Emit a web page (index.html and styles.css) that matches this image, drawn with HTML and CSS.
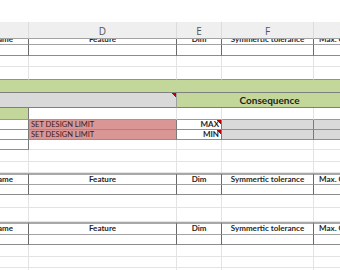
FILE: index.html
```html
<!DOCTYPE html>
<html>
<head>
<meta charset="utf-8">
<link rel="stylesheet" href="styles.css">
</head>
<body>
<div class="sheet">
  <div class="row colhdr">
    <div class="cell"></div><div class="cell">D</div><div class="cell">E</div><div class="cell">F</div><div class="cell">G</div>
  </div>

  <div class="row h6 tbl partial">
    <div class="cell name"><span>Name</span></div>
    <div class="cell"><span>Feature</span></div>
    <div class="cell"><span>Dim</span></div>
    <div class="cell"><span>Symmertic tolerance</span></div>
    <div class="cell maxc"><span>Max. Clearance</span></div>
  </div>
  <div class="row h11 tbl tbl-end">
    <div class="cell"></div><div class="cell"></div><div class="cell"></div><div class="cell"></div><div class="cell"></div>
  </div>
  <div class="row h11">
    <div class="cell"></div><div class="cell"></div><div class="cell"></div><div class="cell"></div><div class="cell"></div>
  </div>
  <div class="row h13 before-band">
    <div class="cell"></div><div class="cell"></div><div class="cell"></div><div class="cell"></div><div class="cell"></div>
  </div>

  <div class="row h13 band">
    <div class="cell full"></div>
  </div>
  <div class="row h15 split">
    <div class="cell grey-l note"></div>
    <div class="cell green-r">Consequence</div>
  </div>
  <div class="row h12 lim-top">
    <div class="cell green-a"></div><div class="cell"></div><div class="cell"></div><div class="cell"></div><div class="cell"></div>
  </div>
  <div class="row h10 lim">
    <div class="cell a"></div>
    <div class="cell red">SET DESIGN LIMIT</div>
    <div class="cell mm note">MAX</div>
    <div class="cell grey"></div>
    <div class="cell grey"></div>
  </div>
  <div class="row h10 lim">
    <div class="cell a"></div>
    <div class="cell red">SET DESIGN LIMIT</div>
    <div class="cell mm note">MIN</div>
    <div class="cell grey"></div>
    <div class="cell grey"></div>
  </div>
  <div class="row h10 lim-end">
    <div class="cell a"></div><div class="cell"></div><div class="cell"></div><div class="cell"></div><div class="cell"></div>
  </div>
  <div class="row h12">
    <div class="cell"></div><div class="cell"></div><div class="cell"></div><div class="cell"></div><div class="cell"></div>
  </div>
  <div class="row h11">
    <div class="cell"></div><div class="cell"></div><div class="cell"></div><div class="cell"></div><div class="cell"></div>
  </div>

  <div class="row h12 tbl thead">
    <div class="cell name"><span>Name</span></div>
    <div class="cell">Feature</div>
    <div class="cell">Dim</div>
    <div class="cell">Symmertic tolerance</div>
    <div class="cell maxc"><span>Max. Clearance</span></div>
  </div>
  <div class="row h10 tbl tbl-end">
    <div class="cell"></div><div class="cell"></div><div class="cell"></div><div class="cell"></div><div class="cell"></div>
  </div>
  <div class="row h13">
    <div class="cell"></div><div class="cell"></div><div class="cell"></div><div class="cell"></div><div class="cell"></div>
  </div>
  <div class="row h14">
    <div class="cell"></div><div class="cell"></div><div class="cell"></div><div class="cell"></div><div class="cell"></div>
  </div>

  <div class="row h13 tbl thead">
    <div class="cell name"><span>Name</span></div>
    <div class="cell">Feature</div>
    <div class="cell">Dim</div>
    <div class="cell">Symmertic tolerance</div>
    <div class="cell maxc"><span>Max. Clearance</span></div>
  </div>
  <div class="row h10 tbl tbl-end">
    <div class="cell"></div><div class="cell"></div><div class="cell"></div><div class="cell"></div><div class="cell"></div>
  </div>
  <div class="row h12">
    <div class="cell"></div><div class="cell"></div><div class="cell"></div><div class="cell"></div><div class="cell"></div>
  </div>
  <div class="row h11">
    <div class="cell"></div><div class="cell"></div><div class="cell"></div><div class="cell"></div><div class="cell"></div>
  </div>
  <div class="row h12">
    <div class="cell"></div><div class="cell"></div><div class="cell"></div><div class="cell"></div><div class="cell"></div>
  </div>
</div>
</body>
</html>
```

FILE: styles.css
```css
* { box-sizing: border-box; margin: 0; padding: 0; }

body {
  margin: 0;
  background: #ffffff;
  font-family: Lato, "Liberation Sans", sans-serif;
  color: #222222;
  width: 340px;
  height: 270px;
  overflow: hidden;
}

.sheet {
  width: 340px;
  padding-top: 22px;
  overflow: hidden;
}

.row {
  display: grid;
  grid-template-columns: 29px 148px 45px 92px 60px;
  width: 374px;
}

.cell {
  border-right: 1px solid #e3e3e3;
  border-bottom: 1px solid #e3e3e3;
  overflow: hidden;
  white-space: nowrap;
  position: relative;
}

.h6 { height: 6px; }
.h10 { height: 10px; }
.h11 { height: 11px; }
.h12 { height: 12px; }
.h13 { height: 13px; }
.h14 { height: 14px; }
.h15 { height: 15px; }

/* column letters */
.colhdr { height: 17px; background: #efefef; }
.colhdr .cell {
  border-right: 1px solid #dcdcdc;
  border-bottom: 1px solid #a3a3a3;
  font-family: "Open Sans", "Liberation Sans", sans-serif;
  font-size: 10px;
  color: #555555;
  text-align: center;
  line-height: 19px;
}

/* table header / body */
.tbl .cell {
  border-right: 1px solid #6a6a6a;
  border-bottom: 1px solid #a2a2a2;
  font-weight: 700;
  font-size: 8px;
  color: #1f1f1f;
  text-align: center;
}
.tbl-end .cell { border-bottom: 1px solid #8c8c8c; }
.thead .cell {
  border-top: 2px solid #a8a8a8;
  line-height: 9px;
}
.partial .cell span {
  display: block;
  margin-top: -5px;
  line-height: 11px;
}
.tbl .name span {
  display: block;
  margin-left: -23px;
}
.tbl .maxc { text-align: left; }
.tbl .maxc span {
  display: block;
  padding-left: 5px;
}

.before-band .cell { border-bottom: 1px solid #8c9a70; }

/* green band */
.band { background: #c4d79b; }
.band .full {
  grid-column: 1 / -1;
  border-right: none;
  border-bottom: 1px solid #7f7f7f;
}

.split .cell { border-bottom: 1px solid #7f7f7f; }
.split .grey-l {
  grid-column: 1 / 3;
  background: #d9d9d9;
  border-right: 1px solid #a0a0a0;
}
.split .green-r {
  grid-column: 3 / -1;
  background: #c4d79b;
  font-weight: 700;
  font-size: 10px;
  color: #1f1f1f;
  text-align: center;
  padding-right: 12px;
  line-height: 14px;
  border-right: none;
}

.note::after {
  content: "";
  position: absolute;
  top: 0;
  right: 0;
  width: 4px;
  height: 4px;
  background: linear-gradient(to bottom left, #c00000 50%, transparent 50%);
}

.lim-top .cell { border-bottom: 1px solid #9a9a9a; }
.lim-top .green-a {
  background: #c4d79b;
  border-right: 1px solid #7a7a7a;
}

.lim .cell {
  border-bottom: 1px solid #8f8f8f;
  border-right: 1px solid #7a7a7a;
  font-size: 7.5px;
  line-height: 9px;
}
.lim .red {
  background: #da9694;
  padding-left: 2px;
  color: #3a2020;
}
.lim .mm {
  text-align: right;
  padding-right: 2px;
  font-weight: 700;
  font-size: 8px;
  color: #1f1f1f;
}
.lim .grey { background: #d9d9d9; }

.lim-end .a {
  border-right: 1px solid #7a7a7a;
  border-bottom: 1px solid #8f8f8f;
}
```
